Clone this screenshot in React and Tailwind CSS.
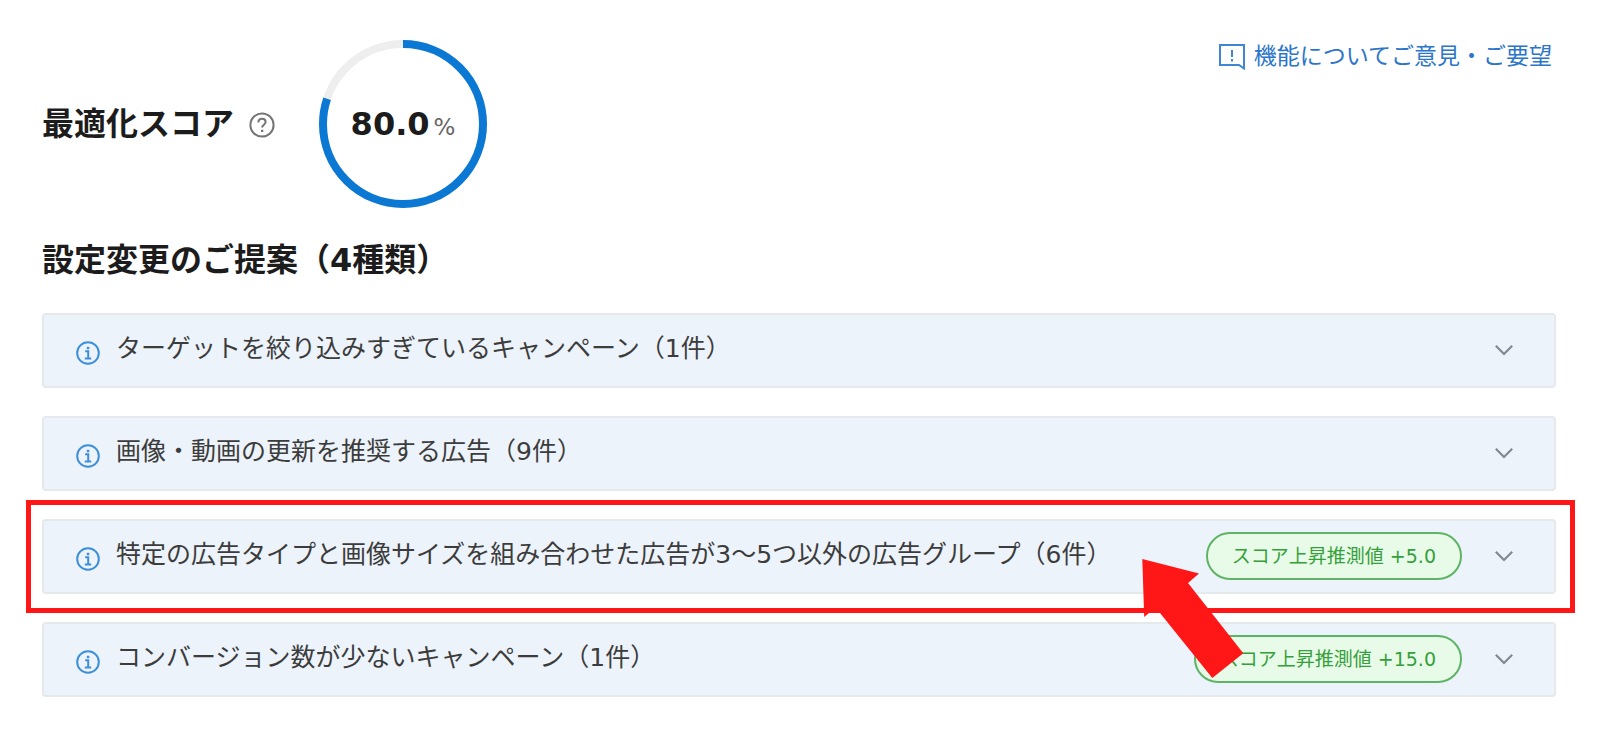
import React, { useState } from 'react';

const SCORE = 80;

const proposals = [
  { id: 'target', label: 'ターゲットを絞り込みすぎているキャンペーン（1件）' },
  { id: 'media', label: '画像・動画の更新を推奨する広告（9件）' },
  {
    id: 'combination',
    label: '特定の広告タイプと画像サイズを組み合わせた広告が3〜5つ以外の広告グループ（6件）',
    gain: '+5.0',
    highlighted: true
  },
  { id: 'conversion', label: 'コンバージョン数が少ないキャンペーン（1件）', gain: '+15.0' }
];

function ScoreRing({ value }) {
  const radius = 80;
  const length = 2 * Math.PI * radius;

  return (
    <div className="relative flex size-[168px] items-center justify-center">
      <svg viewBox="0 0 168 168" className="absolute inset-0 size-full -rotate-90" aria-hidden="true">
        <circle cx="84" cy="84" r={radius} fill="none" stroke="#eeeeee" strokeWidth="8" />
        <circle
          cx="84"
          cy="84"
          r={radius}
          fill="none"
          stroke="#0b78d4"
          strokeWidth="8"
          strokeDasharray={`${(length * value) / 100} ${length}`}
        />
      </svg>
      <p className="flex items-baseline gap-1">
        <span className="text-[32px] leading-10 font-bold text-[#1c1c1c]">{value.toFixed(1)}</span>
        <span className="text-[23px] leading-8 text-[#666]">%</span>
      </p>
    </div>
  );
}

function HelpIcon() {
  return (
    <svg viewBox="0 0 26 26" className="size-[26px]" fill="none" stroke="#757575" strokeWidth="2" aria-hidden="true">
      <circle cx="13" cy="13" r="11.6" />
      <path d="M9.4 10.4c0-2.2 1.5-3.6 3.6-3.6s3.6 1.3 3.6 3.2c0 2.6-3.5 2.8-3.5 5.6" />
      <path d="M12 17.8h2.3v2.2H12z" fill="#757575" stroke="none" />
    </svg>
  );
}

function InfoIcon() {
  return (
    <svg viewBox="0 0 24 24" className="size-6 shrink-0" fill="none" stroke="#3d8edb" strokeWidth="2" aria-hidden="true">
      <circle cx="12" cy="12" r="10.8" />
      <path d="M9.2 10.2h3v7.2M8.8 17.4h6.4" />
      <path d="M10.8 5.8h2.5v2.4h-2.5z" fill="#3d8edb" stroke="none" />
    </svg>
  );
}

function FeedbackIcon() {
  return (
    <svg viewBox="0 0 28 28" className="size-7" fill="none" stroke="#3f87d3" strokeWidth="2" aria-hidden="true">
      <path d="M2 3h24v23.5l-5-3.5H2z" />
      <path d="M14 8v7M14 17v2.4" />
    </svg>
  );
}

function Chevron() {
  return (
    <svg viewBox="0 0 20 12" className="h-3 w-5 shrink-0" fill="none" stroke="#85898d" strokeWidth="2.2" aria-hidden="true">
      <path d="M1.8 1.8 10 10l8.2-8.2" />
    </svg>
  );
}

// Frame round the row and the arrow that points at it
function Highlight() {
  return (
    <>
      <div className="pointer-events-none absolute -top-[19px] -right-[19px] -bottom-[19px] -left-4 border-5 border-[#ff1616]" />
      <svg
        viewBox="0 0 102 120"
        className="pointer-events-none absolute top-10 right-[312px] z-10 h-[120px] w-[102px]"
        aria-hidden="true"
      >
        <path d="M.3 0 57 14.5 46 24l55.3 70.3-31 24.7L18 54H7L2.2 58z" fill="#ff1616" />
      </svg>
    </>
  );
}

function ProposalRow({ item }) {
  const [open, setOpen] = useState(false);

  return (
    <li className="relative">
      <button
        type="button"
        aria-expanded={open}
        onClick={() => setOpen(!open)}
        className="flex h-[75px] w-full items-center rounded-sm border-2 border-[#e6e9eb] bg-[#ecf3fb] pr-10 pb-0.5 pl-8 text-left"
      >
        <span className="mt-1.5">
          <InfoIcon />
        </span>
        <span className="mb-0.5 ml-4 flex-1 text-[25px] leading-8 text-[#3c3c3c]">{item.label}</span>
        {item.gain && (
          <span className="mr-8 flex h-12 items-center rounded-full border-2 border-[#5fb364] bg-[#e8fbe8] px-6 text-[19px] leading-6 whitespace-nowrap text-[#35a03b]">
            スコア上昇推測値 {item.gain}
          </span>
        )}
        <Chevron />
      </button>
      {item.highlighted && <Highlight />}
    </li>
  );
}

export default function App() {
  return (
    <main className="bg-white pt-10 pr-11 pb-12 pl-[42px] font-['DejaVu_Sans','Noto_Sans_CJK_JP',sans-serif]">
      <header className="flex items-start justify-between">
        <div className="flex items-center">
          <h1 className="text-[32px] leading-10 font-bold text-[#1c1c1c]">最適化スコア</h1>
          <button type="button" aria-label="最適化スコアについて" className="mt-0.5 mr-11 ml-[15px]">
            <HelpIcon />
          </button>
          <ScoreRing value={SCORE} />
        </div>
        <a href="#feedback" className="mr-1 flex items-center gap-2 text-[23px] leading-8 text-[#2c76c9]">
          <FeedbackIcon />
          機能についてご意見・ご要望
        </a>
      </header>

      <section>
        <h2 className="mt-8 text-[32px] leading-10 font-bold text-[#1c1c1c]">設定変更のご提案（4種類）</h2>
        <ul className="mt-[33px] flex flex-col gap-7">
          {proposals.map((item) => (
            <ProposalRow key={item.id} item={item} />
          ))}
        </ul>
      </section>
    </main>
  );
}
